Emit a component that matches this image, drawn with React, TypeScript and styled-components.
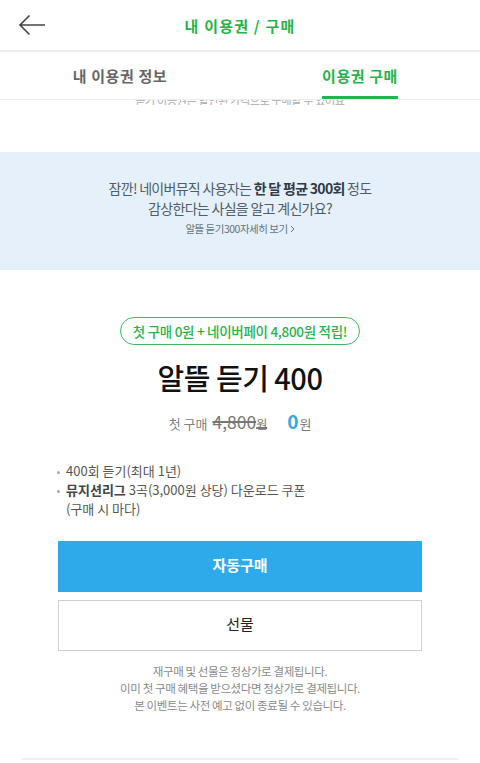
import styled, { createGlobalStyle } from "styled-components";

const GlobalStyle = createGlobalStyle`
  html, body {
    margin: 0;
    padding: 0;
    background: #ffffff;
  }
  body {
    font-family: "Noto Sans CJK KR", "Noto Sans", sans-serif;
    color: #222;
  }
`;

const Page = styled.div`
  width: 480px;
  height: 763px;
  overflow: hidden;
  display: flex;
  flex-direction: column;
`;

const Header = styled.header`
  height: 52px;
  flex-shrink: 0;
  display: grid;
  grid-template-columns: 64px 1fr 64px;
  align-items: center;
  border-bottom: 2px solid #ececec;
  box-sizing: border-box;
`;

const BackButton = styled.button`
  border: 0;
  background: none;
  padding: 0 0 0 18px;
  display: flex;
  align-items: center;
  height: 100%;
`;

const Title = styled.h1`
  margin: 0;
  text-align: center;
  font-size: 15px;
  font-weight: 700;
  color: #27b24a;
  letter-spacing: 1.2px;
`;

const Tabs = styled.nav`
  height: 48px;
  flex-shrink: 0;
  display: grid;
  grid-template-columns: 1fr 1fr;
  border-bottom: 1px solid #eeeeee;
  box-sizing: border-box;
`;

const Tab = styled.div`
  display: flex;
  justify-content: center;
  align-items: stretch;
`;

const TabLabel = styled.span<{ $active?: boolean }>`
  display: flex;
  align-items: center;
  padding-top: 2px;
  font-size: 15px;
  font-weight: 700;
  letter-spacing: 0.6px;
  color: ${(p) => (p.$active ? "#27b24a" : "#666")};
  border-bottom: 3px solid ${(p) => (p.$active ? "#27b24a" : "transparent")};
  box-sizing: border-box;
`;

const Scroll = styled.main`
  flex: 1;
  display: flex;
  flex-direction: column;
`;

const ClippedLine = styled.div`
  height: 5px;
  overflow: hidden;
  display: flex;
  justify-content: center;
  align-items: flex-end;
  font-size: 11px;
  color: #aaa;
  line-height: 11px;
`;

const ClippedText = styled.span`
  margin-bottom: -1px;
  letter-spacing: -0.3px;
`;

const Spacer = styled.div<{ $h: number }>`
  height: ${(p) => p.$h}px;
  flex-shrink: 0;
`;

const Banner = styled.section`
  height: 118px;
  background: #e6f0fa;
  display: flex;
  flex-direction: column;
  align-items: center;
  justify-content: center;
  padding-bottom: 8px;
  box-sizing: border-box;
  color: #4f5d6b;
  text-align: center;
`;

const BannerText = styled.p`
  margin: 0;
  font-size: 14px;
  line-height: 20px;
  letter-spacing: -0.7px;
`;

const Strong = styled.b`
  color: #2e3b48;
  font-weight: 700;
`;

const BannerLink = styled.a`
  margin-top: 3px;
  font-size: 10.5px;
  color: #66737f;
  letter-spacing: -0.5px;
  display: flex;
  align-items: center;
  gap: 2px;
`;

const Product = styled.section`
  display: flex;
  flex-direction: column;
  align-items: center;
  padding-top: 47px;
`;

const Pill = styled.div`
  height: 28px;
  padding: 0 12px;
  border: 1.5px solid #3dbb5c;
  border-radius: 14px;
  display: flex;
  align-items: center;
  font-size: 13.5px;
  font-weight: 500;
  color: #27b24a;
  letter-spacing: -0.3px;
  box-sizing: border-box;
`;

const ProductName = styled.h2`
  margin: 12px 0 0;
  font-size: 29px;
  font-weight: 500;
  color: #111;
  letter-spacing: -0.5px;
  line-height: 40px;
`;

const PriceRow = styled.div`
  margin-top: 10px;
  display: flex;
  align-items: baseline;
  color: #808080;
  font-size: 13px;
`;

const OldPrice = styled.span`
  margin-left: 5px;
  font-size: 17.5px;
  color: #777;
  text-decoration: line-through;
  text-decoration-thickness: 1.5px;
`;

const Won = styled.span`
  font-size: 12px;
`;

const NewPrice = styled.span`
  margin-left: 20px;
  font-size: 13px;
  color: #777;
`;

const Zero = styled.b`
  font-size: 19px;
  font-weight: 700;
  color: #36a9e1;
  margin-right: 1px;
`;

const Benefits = styled.ul`
  list-style: none;
  margin: 27px 0 0;
  padding: 0 0 0 56px;
  font-size: 13px;
  line-height: 19px;
  color: #555;
`;

const Benefit = styled.li`
  position: relative;
  padding-left: 10px;
  &::before {
    content: "";
    position: absolute;
    left: 1px;
    top: 10px;
    width: 3px;
    height: 3px;
    border-radius: 50%;
    background: #aaa;
  }
`;

const BenefitStrong = styled.b`
  color: #444;
  font-weight: 700;
`;

const Buttons = styled.div`
  margin: 23px 58px 0;
  display: flex;
  flex-direction: column;
  gap: 8px;
`;

const Button = styled.button<{ $primary?: boolean }>`
  height: 51px;
  border: ${(p) => (p.$primary ? "0" : "1px solid #cfcfcf")};
  background: ${(p) => (p.$primary ? "#2caaea" : "#fff")};
  color: ${(p) => (p.$primary ? "#fff" : "#222")};
  font-family: inherit;
  font-size: 15px;
  font-weight: ${(p) => (p.$primary ? 700 : 400)};
  padding-bottom: 6px;
`;

const Notes = styled.div`
  margin-top: 12px;
  text-align: center;
  font-size: 11.5px;
  line-height: 17px;
  color: #8a8a8a;
  letter-spacing: -0.4px;
`;

const Divider = styled.div`
  margin: 44px 22px 0;
  height: 2px;
  background: #efefef;
`;

export default function App() {
  return (
    <Page>
      <GlobalStyle />
      <Header>
        <BackButton aria-label="back">
          <svg width="28" height="22" viewBox="0 0 28 22" fill="none">
            <path d="M27 11H2M11.5 1.5L2 11l9.5 9.5" stroke="#444" strokeWidth="1.6" />
          </svg>
        </BackButton>
        <Title>내 이용권 / 구매</Title>
        <span />
      </Header>
      <Tabs>
        <Tab>
          <TabLabel>내 이용권 정보</TabLabel>
        </Tab>
        <Tab>
          <TabLabel $active>이용권 구매</TabLabel>
        </Tab>
      </Tabs>
      <Scroll>
        <ClippedLine>
          <ClippedText>듣기 이용권은 할인된 가격으로 구매할 수 있어요</ClippedText>
        </ClippedLine>
        <Spacer $h={47} />
        <Banner>
          <BannerText>
            잠깐! 네이버뮤직 사용자는 <Strong>한 달 평균 300회</Strong> 정도
          </BannerText>
          <BannerText>감상한다는 사실을 알고 계신가요?</BannerText>
          <BannerLink>
            알뜰 듣기300자세히 보기
            <svg width="5" height="8" viewBox="0 0 5 8">
              <path d="M1 1l3 3-3 3" stroke="#66737f" fill="none" strokeWidth="1" />
            </svg>
          </BannerLink>
        </Banner>
        <Product>
          <Pill>첫 구매 0원 + 네이버페이 4,800원 적립!</Pill>
          <ProductName>알뜰 듣기 400</ProductName>
          <PriceRow>
            첫 구매
            <OldPrice>
              4,800<Won>원</Won>
            </OldPrice>
            <NewPrice>
              <Zero>0</Zero>원
            </NewPrice>
          </PriceRow>
        </Product>
        <Benefits>
          <Benefit>400회 듣기(최대 1년)</Benefit>
          <Benefit>
            <BenefitStrong>뮤지션리그</BenefitStrong> 3곡(3,000원 상당) 다운로드 쿠폰
            <br />
            (구매 시 마다)
          </Benefit>
        </Benefits>
        <Buttons>
          <Button $primary>자동구매</Button>
          <Button>선물</Button>
        </Buttons>
        <Notes>
          재구매 및 선물은 정상가로 결제됩니다.
          <br />
          이미 첫 구매 혜택을 받으셨다면 정상가로 결제됩니다.
          <br />
          본 이벤트는 사전 예고 없이 종료될 수 있습니다.
        </Notes>
        <Divider />
      </Scroll>
    </Page>
  );
}
